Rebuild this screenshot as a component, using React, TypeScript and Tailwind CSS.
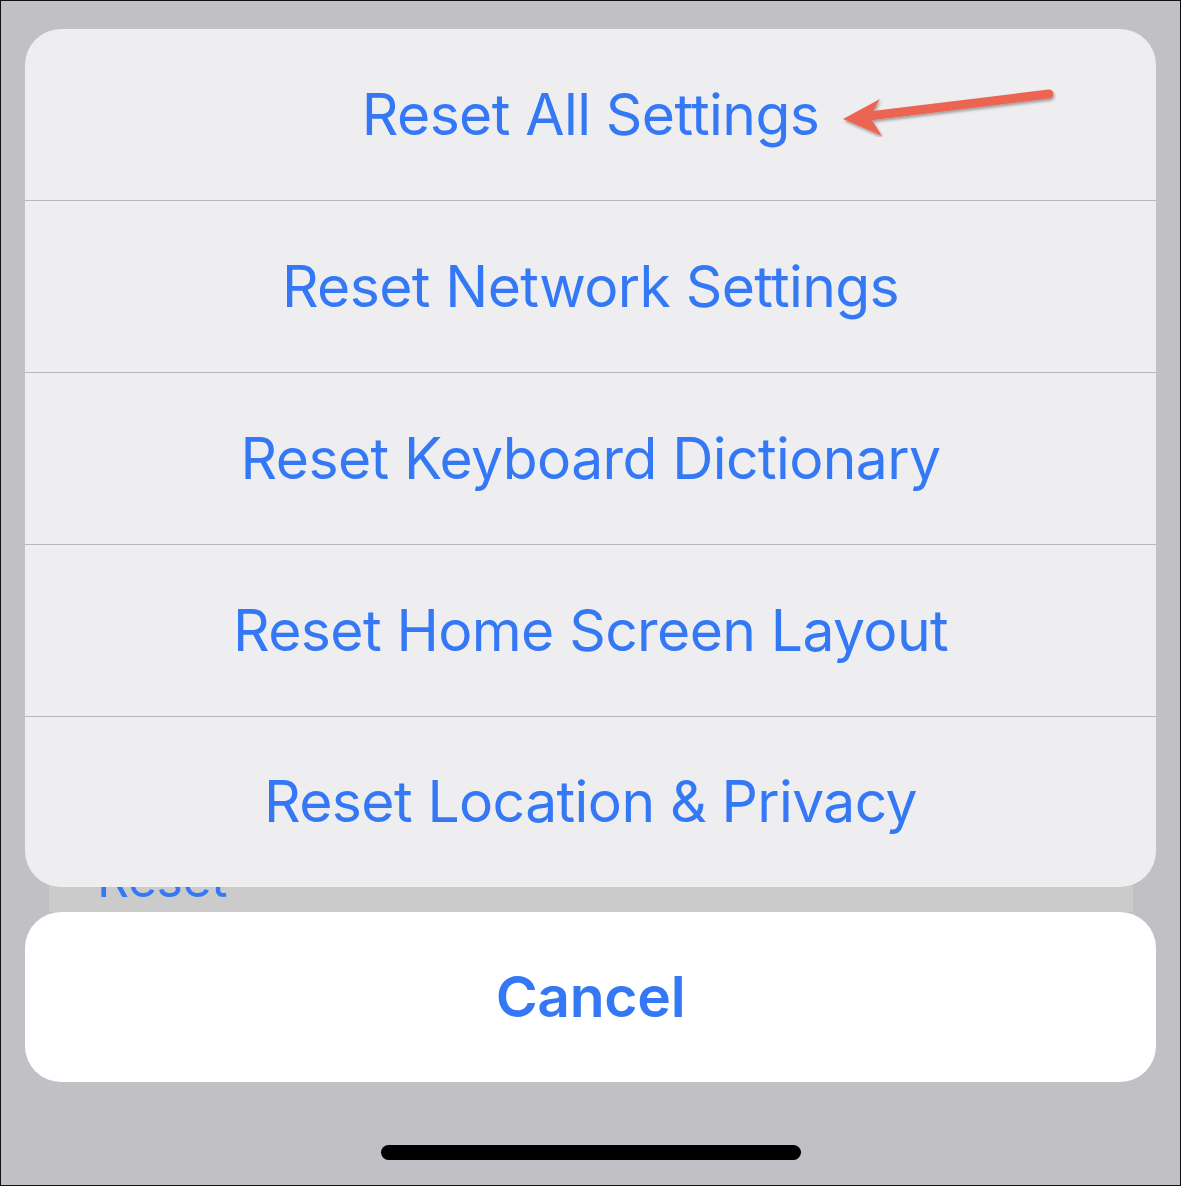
import React from "react";

const options = [
  "Reset All Settings",
  "Reset Network Settings",
  "Reset Keyboard Dictionary",
  "Reset Home Screen Layout",
  "Reset Location & Privacy",
];

function Arrow() {
  return (
    <svg
      className="absolute left-[834px] top-[80px]"
      width="230"
      height="56"
      viewBox="0 0 230 56"
    >
      <defs>
        <filter id="sh" x="-10%" y="-50%" width="120%" height="200%">
          <feDropShadow dx="1" dy="2" stdDeviation="1.5" floodColor="#000" floodOpacity="0.35" />
        </filter>
      </defs>
      <g filter="url(#sh)">
        <line x1="214" y1="13" x2="34" y2="35" stroke="#ec6553" strokeWidth="9" strokeLinecap="round" />
        <path d="M8 38 L45 18 L35 36 L47 55 Z" fill="#ec6553" />
      </g>
    </svg>
  );
}

export default function App() {
  return (
    <div
      className="relative w-[1181px] h-[1186px] overflow-hidden border border-[#111] bg-[#c1c0c5]"
      style={{ fontFamily: "Inter, 'Noto Sans', sans-serif" }}
    >
      {/* list behind the sheet */}
      <div className="absolute left-[48px] top-[700px] w-[1084px] h-[211px] bg-[#cbcbcb]">
        <div className="absolute left-[48px] top-[141px] text-[50px] tracking-[-0.5px] text-[#3478f6]">Reset</div>
      </div>

      <div className="relative flex flex-col px-[24px] pt-[28px]">
        <div className="flex flex-col rounded-[36px] bg-[#eeeef0] overflow-hidden">
          {options.map((label, i) => (
            <div
              key={label}
              className={
                "flex items-center justify-center text-[57px] tracking-[-0.6px] text-[#3478f6] " +
                (i === 0 ? "h-[171px]" : i === options.length - 1 ? "h-[171px] border-t border-[#b7b7ba]" : "h-[172px] border-t border-[#b7b7ba]")
              }
            >
              {label}
            </div>
          ))}
        </div>

        <div className="mt-[25px] flex h-[170px] items-center justify-center rounded-[36px] bg-white text-[57px] font-semibold tracking-[-0.3px] text-[#3478f6]">
          Cancel
        </div>

        <div className="mx-auto mt-[63px] h-[15px] w-[420px] rounded-full bg-black" />
      </div>

      <Arrow />
    </div>
  );
}
